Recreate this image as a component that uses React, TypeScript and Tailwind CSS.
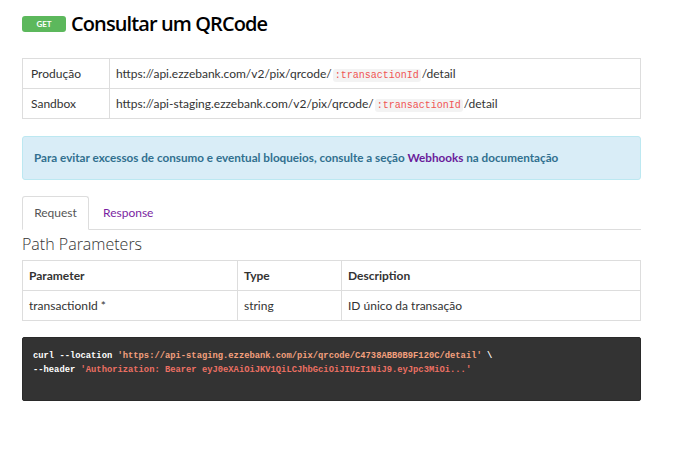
const code1Str = "'https://api-staging.ezzebank.com/pix/qrcode/C4738ABB0B9F120C/detail'";
const code2Str = "'Authorization: Bearer eyJ0eXAiOiJKV1QiLCJhbGciOiJIUzI1NiJ9.eyJpc3MiOi...'";

function Param({ children }: { children: string }) {
  return (
    <code className="mx-[1px] rounded-[3px] bg-[#f3f3f3] px-[2px] py-[1px] font-['Liberation_Mono',monospace] text-[10px] text-[#f05454]">
      {children}
    </code>
  );
}

export default function App() {
  return (
    <div className="min-h-[454px] w-[682px] bg-white pl-[22px] pt-[12px] font-['Lato',sans-serif] text-[12px] text-[#333]">
      <div className="w-[619px]">
        <div className="flex items-center gap-[5px]">
          <span className="flex h-[16px] w-[44px] items-center justify-center rounded-[3px] bg-[#5cb85c] text-[8px] font-bold text-white">
            GET
          </span>
          <h1 className="font-['Open_Sans',sans-serif] text-[20px] font-semibold leading-[24px] tracking-[-0.9px] text-black">
            Consultar um QRCode
          </h1>
        </div>

        <table className="mt-[22px] w-full border-collapse border border-[#ddd]">
          <tbody>
            <tr className="h-[30px]">
              <td className="w-[87px] border border-[#ddd] px-[8px]">Produção</td>
              <td className="border border-[#ddd] px-[6px]">
                https://api.ezzebank.com/v2/pix/qrcode/<Param>:transactionId</Param>/detail
              </td>
            </tr>
            <tr className="h-[30px]">
              <td className="border border-[#ddd] px-[8px]">Sandbox</td>
              <td className="border border-[#ddd] px-[6px]">
                https://api-staging.ezzebank.com/v2/pix/qrcode/<Param>:transactionId</Param>/detail
              </td>
            </tr>
          </tbody>
        </table>

        <div className="mt-[17px] flex h-[44px] items-center rounded-[3px] border border-[#bce8f1] bg-[#d9edf7] px-[11px] text-[11.7px] font-bold text-[#31708f]">
          <p>
            Para evitar excessos de consumo e eventual bloqueios, consulte a seção{" "}
            <span className="text-[#6a1b9a]">Webhooks</span> na documentação
          </p>
        </div>

        <div className="mt-[16px] flex border-b border-[#ddd]">
          <div className="-mb-px flex h-[34px] w-[67px] items-center justify-center rounded-t-[3px] border border-b-white border-[#ddd] bg-white text-[#555]">
            Request
          </div>
          <div className="flex h-[33px] items-center px-[14px] text-[#7b1fa2]">Response</div>
        </div>

        <h2 className="mt-[4px] font-['Open_Sans',sans-serif] text-[16px] font-light leading-[20px] text-[#333]">
          Path Parameters
        </h2>

        <table className="mt-[6px] w-full border-collapse border border-[#ddd]">
          <tbody>
            <tr className="h-[30px] font-bold">
              <td className="w-[215px] border border-[#ddd] px-[6px]">Parameter</td>
              <td className="w-[104px] border border-[#ddd] px-[6px]">Type</td>
              <td className="border border-[#ddd] px-[6px]">Description</td>
            </tr>
            <tr className="h-[30px]">
              <td className="border border-[#ddd] px-[6px]">transactionId *</td>
              <td className="border border-[#ddd] px-[6px]">string</td>
              <td className="border border-[#ddd] px-[6px]">ID único da transação</td>
            </tr>
          </tbody>
        </table>

        <pre className="mt-[16px] h-[64px] rounded-[2px] border border-[#2a2a2a] bg-[#333] px-[10px] pt-[11px] font-['Liberation_Mono',monospace] text-[8.8px] font-bold leading-[14px] text-white">
          <div>
            curl --location <span className="text-[#f4a07e]">{code1Str}</span> \
          </div>
          <div>
            --header <span className="text-[#ec7063]">{code2Str}</span>
          </div>
        </pre>
      </div>
    </div>
  );
}
